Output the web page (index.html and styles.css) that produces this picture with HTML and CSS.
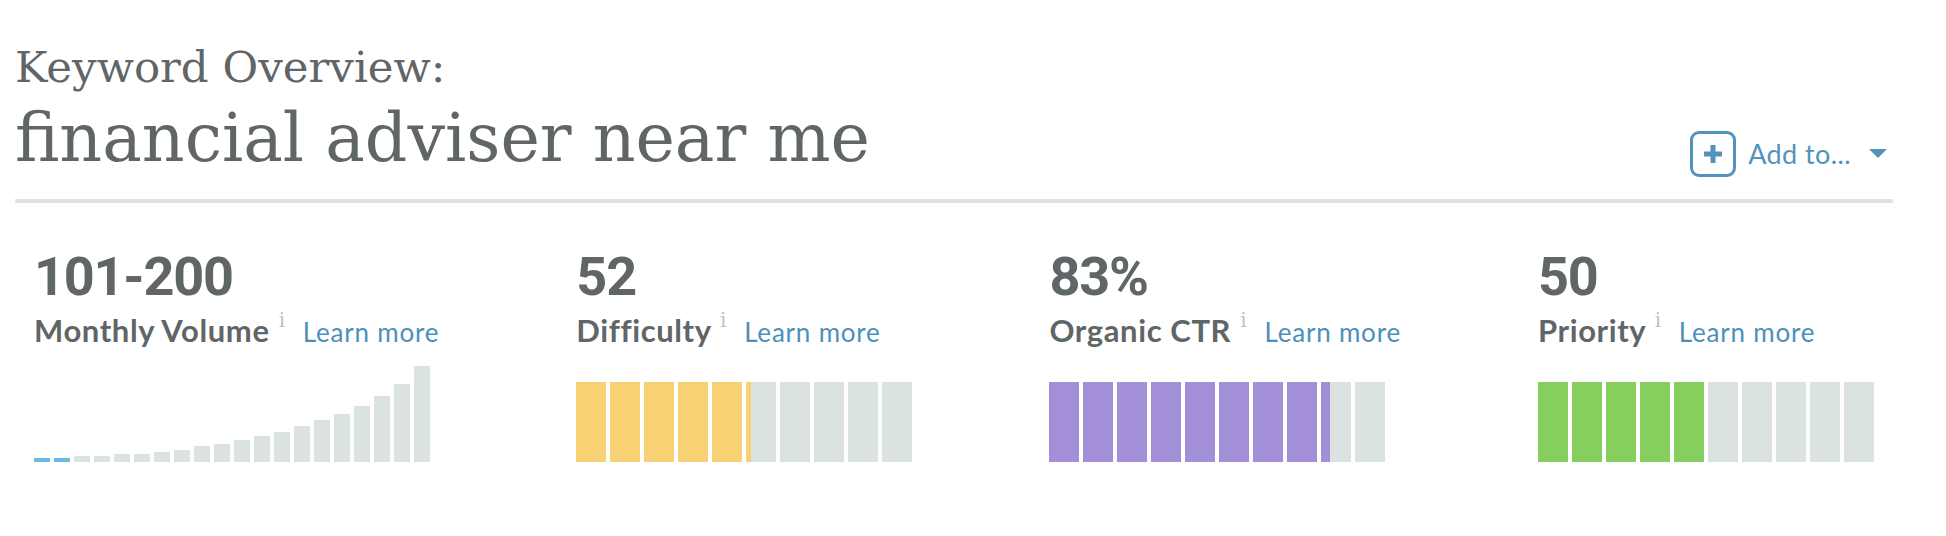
FILE: index.html
```html
<!DOCTYPE html>
<html lang="en">
<head>
  <meta charset="UTF-8" />
  <meta name="viewport" content="width=device-width, initial-scale=1.0"/>
  <title>Keyword Overview</title>
  <link rel="stylesheet" href="styles.css">
</head>
<body>
  <div class="page">
    <header class="overview">
      <div class="titles">
        <div class="kicker">Keyword Overview:</div>
        <h1 class="keyword">financial adviser near me</h1>
      </div>
      <button class="add-btn">
        <span class="plus-box">
          <svg width="18" height="18" viewBox="0 0 18 18"><path d="M6.5 0h5v6.5H18v5h-6.5V18h-5v-6.5H0v-5h6.5z" fill="#5393bb"/></svg>
        </span>
        <span class="add-text">Add to...</span>
        <svg class="caret" width="18" height="9" viewBox="0 0 18 9"><path d="M0 0h18L9 9z" fill="#5393bb"/></svg>
      </button>
    </header>

    <div class="metrics">
      <div class="metric">
        <div class="value">101-200</div>
        <div class="label">Monthly Volume <span class="info">i</span> <a class="learn" href="#">Learn more</a></div>
        <div class="chart volume">
          <div class="vbar active" style="height:4px"></div>
          <div class="vbar active" style="height:4px"></div>
          <div class="vbar" style="height:6px"></div>
          <div class="vbar" style="height:6px"></div>
          <div class="vbar" style="height:8px"></div>
          <div class="vbar" style="height:8px"></div>
          <div class="vbar" style="height:10px"></div>
          <div class="vbar" style="height:12px"></div>
          <div class="vbar" style="height:16px"></div>
          <div class="vbar" style="height:18px"></div>
          <div class="vbar" style="height:22px"></div>
          <div class="vbar" style="height:26px"></div>
          <div class="vbar" style="height:30px"></div>
          <div class="vbar" style="height:36px"></div>
          <div class="vbar" style="height:42px"></div>
          <div class="vbar" style="height:48px"></div>
          <div class="vbar" style="height:56px"></div>
          <div class="vbar" style="height:66px"></div>
          <div class="vbar" style="height:78px"></div>
          <div class="vbar" style="height:96px"></div>
        </div>
      </div>

      <div class="metric">
        <div class="value">52</div>
        <div class="label">Difficulty <span class="info">i</span> <a class="learn" href="#">Learn more</a></div>
        <div class="chart segments difficulty">
          <div class="seg on"></div>
          <div class="seg on"></div>
          <div class="seg on"></div>
          <div class="seg on"></div>
          <div class="seg on"></div>
          <div class="seg"><span class="fill" style="width:14%"></span></div>
          <div class="seg"></div>
          <div class="seg"></div>
          <div class="seg"></div>
          <div class="seg"></div>
        </div>
      </div>

      <div class="metric">
        <div class="value">83%</div>
        <div class="label">Organic CTR <span class="info">i</span> <a class="learn" href="#">Learn more</a></div>
        <div class="chart segments ctr">
          <div class="seg on"></div>
          <div class="seg on"></div>
          <div class="seg on"></div>
          <div class="seg on"></div>
          <div class="seg on"></div>
          <div class="seg on"></div>
          <div class="seg on"></div>
          <div class="seg on"></div>
          <div class="seg"><span class="fill" style="width:27%"></span></div>
          <div class="seg"></div>
        </div>
      </div>

      <div class="metric">
        <div class="value">50</div>
        <div class="label">Priority <span class="info">i</span> <a class="learn" href="#">Learn more</a></div>
        <div class="chart segments priority">
          <div class="seg on"></div>
          <div class="seg on"></div>
          <div class="seg on"></div>
          <div class="seg on"></div>
          <div class="seg on"></div>
          <div class="seg"></div>
          <div class="seg"></div>
          <div class="seg"></div>
          <div class="seg"></div>
          <div class="seg"></div>
        </div>
      </div>
    </div>
  </div>
</body>
</html>
```

FILE: styles.css
```css
body {
  margin: 0;
  background: #fff;
  color: #606667;
  font-family: 'Lato', sans-serif;
}

.page {
  margin-left: 15px;
  width: 1878px;
}

/* En-tête */
.overview {
  display: flex;
  justify-content: space-between;
  align-items: flex-end;
  padding-top: 41px;
  border-bottom: 4px solid #dce3e2;
}

.titles {
  padding-bottom: 27px;
}

.kicker {
  font-family: 'DejaVu Serif', serif;
  font-size: 43.5px;
  line-height: 1.2;
  font-weight: normal;
}

.keyword {
  margin: 12px 0 0;
  font-family: 'DejaVu Serif', serif;
  font-size: 66.5px;
  line-height: 1;
  font-weight: normal;
}

.add-btn {
  display: flex;
  align-items: center;
  background: none;
  border: none;
  padding: 0 6px 0 0;
  margin-bottom: 22px;
  cursor: pointer;
  color: #5393bb;
  font-family: 'Lato', sans-serif;
  font-size: 27px;
  letter-spacing: 0.4px;
}

.plus-box {
  display: flex;
  align-items: center;
  justify-content: center;
  width: 46px;
  height: 46px;
  box-sizing: border-box;
  border: 3px solid #5393bb;
  border-radius: 9px;
}

.add-text {
  margin-left: 12px;
}

.caret {
  margin-left: 18px;
}

/* Indicateurs */
.metrics {
  display: flex;
  justify-content: space-between;
  padding: 0 19px;
}

.value {
  margin-top: 47px;
  font-family: 'Roboto', sans-serif;
  font-weight: 700;
  font-size: 54px;
  line-height: 1;
  letter-spacing: -1.2px;
  color: #606667;
}

.label {
  margin-top: 4px;
  font-size: 31px;
  line-height: 1.2;
  font-weight: 700;
  letter-spacing: 0.6px;
  white-space: nowrap;
}

.info {
  display: inline-block;
  vertical-align: 15px;
  margin: 0 9px 0 1px;
  font-family: 'DejaVu Serif', serif;
  font-size: 20px;
  font-weight: normal;
  color: #bcc3c3;
}

.learn {
  font-size: 26px;
  font-weight: 400;
  letter-spacing: 0.8px;
  color: #4c8fba;
  text-decoration: none;
}

.chart {
  display: flex;
  align-items: flex-end;
  height: 96px;
  margin-top: 17px;
}

.volume {
  gap: 4px;
}

.vbar {
  width: 16px;
  background: #dbe3e2;
}

.vbar.active {
  background: #6cb9e4;
}

.segments {
  gap: 4px;
}

.seg {
  width: 30px;
  height: 80px;
  background: #dbe3e2;
  display: flex;
}

.fill {
  height: 100%;
}

.difficulty .on,
.difficulty .fill {
  background: #f7d174;
}

.ctr .on,
.ctr .fill {
  background: #a28fd8;
}

.priority .on,
.priority .fill {
  background: #86ce5e;
}
```
